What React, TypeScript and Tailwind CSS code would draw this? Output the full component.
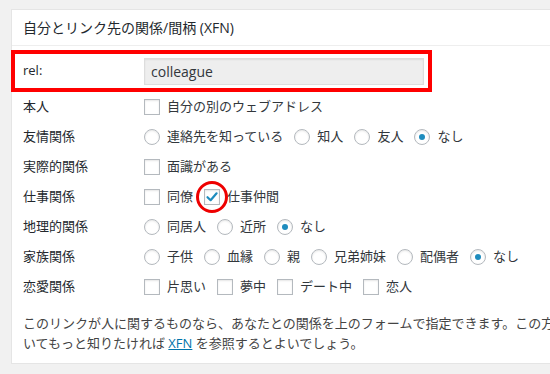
import React from "react";

const font = { fontFamily: '"Open Sans", "Noto Sans CJK JP", sans-serif' };

function Box({ checked = false, circle = false }: { checked?: boolean; circle?: boolean }) {
  return (
    <span className="relative inline-flex w-4 h-4 shrink-0 items-center justify-center border border-[#b4b9be] bg-white shadow-[inset_0_1px_2px_rgba(0,0,0,0.1)]">
      {checked && (
        <svg width="14" height="14" viewBox="0 0 14 14">
          <path d="M2.5 7.2 L5.6 10.2 L11.6 3.3" fill="none" stroke="#1e8cbe" strokeWidth="2.2" strokeLinecap="round" strokeLinejoin="round" />
        </svg>
      )}
      {circle && (
        <span className="absolute left-[-9px] top-[-9px] w-[32px] h-[32px] rounded-full border-[3px] border-[#ee0000]" />
      )}
    </span>
  );
}

function Radio({ checked = false }: { checked?: boolean }) {
  return (
    <span className="inline-flex w-4 h-4 shrink-0 items-center justify-center rounded-full border border-[#b4b9be] bg-white shadow-[inset_0_1px_2px_rgba(0,0,0,0.1)]">
      {checked && <span className="w-[6px] h-[6px] rounded-full bg-[#1e8cbe]" />}
    </span>
  );
}

type Item = { t: string; type: "c" | "r"; checked?: boolean; circle?: boolean };

function Row({ label, items }: { label: string; items: Item[] }) {
  return (
    <div className="flex h-[30px] items-center">
      <div className="w-[121px] shrink-0 text-[13px] text-[#23282d]">{label}</div>
      <div className="flex items-center gap-[11px] text-[13px] text-[#32373c] whitespace-nowrap">
        {items.map((it, i) => (
          <div key={i} className="flex items-center gap-[7px]">
            {it.type === "c" ? <Box checked={it.checked} circle={it.circle} /> : <Radio checked={it.checked} />}
            <span>{it.t}</span>
          </div>
        ))}
      </div>
    </div>
  );
}

export default function App() {
  return (
    <div className="w-[550px] h-[374px] overflow-hidden bg-[#f1f1f1]" style={font}>
      <div className="ml-[11px] mt-[9px] w-[620px] border border-[#e5e5e5] bg-white">
        <div className="h-[36px] flex items-center px-[11px] border-b border-[#eeeeee] text-[14px] text-[#23282d]">
          自分とリンク先の関係/間柄 (XFN)
        </div>
        <div className="px-[11px] pt-[8px] pb-[10px]">
          <div className="relative flex h-[34px] items-center">
            <span className="absolute left-[-12px] top-[-4px] w-[421px] h-[42px] border-4 border-[#ff0000]" />
            <div className="w-[121px] shrink-0 text-[13px] text-[#23282d]">rel:</div>
            <div className="w-[280px] h-[27px] flex items-center border border-[#dddddd] bg-[#eeeeee] px-[6px] text-[14px] text-[#32373c] shadow-[inset_0_1px_2px_rgba(0,0,0,0.07)]">
              colleague
            </div>
          </div>
          <div className="mt-[4px]">
            <Row label="本人" items={[{ t: "自分の別のウェブアドレス", type: "c" }]} />
            <Row
              label="友情関係"
              items={[
                { t: "連絡先を知っている", type: "r" },
                { t: "知人", type: "r" },
                { t: "友人", type: "r" },
                { t: "なし", type: "r", checked: true },
              ]}
            />
            <Row label="実際的関係" items={[{ t: "面識がある", type: "c" }]} />
            <Row
              label="仕事関係"
              items={[
                { t: "同僚", type: "c" },
                { t: "仕事仲間", type: "c", checked: true, circle: true },
              ]}
            />
            <Row
              label="地理的関係"
              items={[
                { t: "同居人", type: "r" },
                { t: "近所", type: "r" },
                { t: "なし", type: "r", checked: true },
              ]}
            />
            <Row
              label="家族関係"
              items={[
                { t: "子供", type: "r" },
                { t: "血縁", type: "r" },
                { t: "親", type: "r" },
                { t: "兄弟姉妹", type: "r" },
                { t: "配偶者", type: "r" },
                { t: "なし", type: "r", checked: true },
              ]}
            />
            <Row
              label="恋愛関係"
              items={[
                { t: "片思い", type: "c" },
                { t: "夢中", type: "c" },
                { t: "デート中", type: "c" },
                { t: "恋人", type: "c" },
              ]}
            />
          </div>
          <p className="mt-[11px] text-[13px] leading-[20px] text-[#444444] whitespace-nowrap">
            このリンクが人に関するものなら、あなたとの関係を上のフォームで指定できます。この方々につ
            <br />
            いてもっと知りたければ{" "}
            <span className="text-[#0073aa] underline">XFN</span> を参照するとよいでしょう。
          </p>
        </div>
      </div>
    </div>
  );
}
